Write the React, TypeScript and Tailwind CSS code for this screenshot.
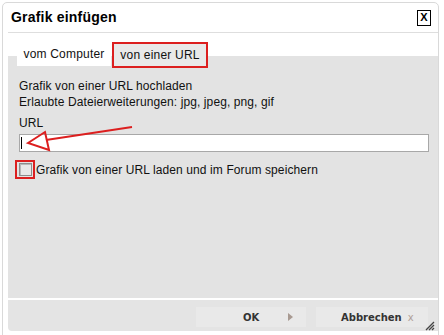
import React from 'react'

// Dialog "Grafik einfügen" with annotation marks (red boxes + arrow)
export default function App() {
  return (
    <div className="relative w-[444px] h-[335px] overflow-hidden bg-white" style={{ fontFamily: '"Liberation Sans", Arial, sans-serif' }}>
      <div className="ml-[2px] mt-[2px] w-[437px] h-[345px] border border-[#d9d9d9] rounded-t-[5px] bg-white flex flex-col">
        {/* Header */}
        <div className="ml-[5px] h-[30px] border-b border-[#dedede] flex items-center justify-between pl-[3px] pr-[7px]">
          <span className="text-[14px] font-bold text-black tracking-[0.2px]">Grafik einfügen</span>
          <span className="w-[14px] h-[16px] border border-black flex items-center justify-center text-[11px] font-bold leading-none text-black">X</span>
        </div>

        {/* Tabs */}
        <div className="ml-[5px] mt-[9px] h-[26px] flex items-stretch pl-[9px] bg-[linear-gradient(to_bottom,#ffffff_14px,#e3e3e3_14px)] tracking-[0.2px]">
          <div className="w-[94px] h-[24px] bg-white flex items-center justify-center text-[12px] text-[#111]">vom Computer</div>
          <div className="w-[96px] h-[26px] ml-px border-2 border-[#dc1f1f] bg-[#e9e9e9] flex items-center justify-center text-[12px] text-[#111]">von einer URL</div>
        </div>

        {/* Panel */}
        <div className="ml-[5px] h-[230px] bg-[#e3e3e3] pl-[11px] pr-[9px] pt-[10px] text-[12px] text-[#111] tracking-[0.1px]">
          <div className="leading-[16px]">Grafik von einer URL hochladen</div>
          <div className="leading-[16px]">Erlaubte Dateierweiterungen: jpg, jpeg, png, gif</div>
          <div className="mt-[6px] leading-[15px]">URL</div>
          <div className="mt-[3px] h-[18px] bg-white border border-[#a8a8a8] flex items-center pl-[1px]">
            <span className="w-px h-[12px] bg-black" />
          </div>
          <div className="mt-[8px] flex items-center">
            <div className="-ml-[4px] w-[20px] h-[19px] border-2 border-[#dc1f1f] flex items-center justify-center">
              <span className="w-[13px] h-[13px] border border-[#8c8c8c] bg-[#e8e8e8] shadow-[inset_1px_1px_0_#b8b8b8]" />
            </div>
            <span className="ml-px">Grafik von einer URL laden und im Forum speichern</span>
          </div>
        </div>

        {/* Footer */}
        <div className="ml-[5px] mt-[2px] h-[31px] bg-[#e4e4e4] rounded-bl-[4px] flex items-center justify-end gap-[10px] pr-[10px] pt-[3px]" style={{ fontFamily: '"DejaVu Sans", Verdana, sans-serif' }}>
          <div className="w-[110px] h-[20px] bg-[#e9e9e9] flex items-center pl-[47px] text-[10px] font-bold text-[#333]">
            <span>OK</span>
            <span className="ml-auto mr-[13px] w-0 h-0 border-y-[4px] border-y-transparent border-l-[5px] border-l-[#a89a92]" />
          </div>
          <div className="w-[112px] h-[20px] bg-[#e9e9e9] flex items-center pl-[25px] text-[10px] font-bold text-[#333]">
            <span>Abbrechen</span>
            <span className="ml-[6px] text-[#b0a098] font-normal">x</span>
          </div>
        </div>
      </div>

      {/* resize grip */}
      <svg className="absolute left-[425px] top-[320px]" width="10" height="11" viewBox="0 0 10 11">
        <path d="M1 10 L9 2 M4 10 L9 5 M7 10 L9 8" stroke="#444" strokeWidth="1.3" />
      </svg>

      {/* red annotation arrow */}
      <svg className="absolute left-0 top-0 pointer-events-none" width="444" height="335">
        <path d="M132 127 L46 140" stroke="#dc1f1f" strokeWidth="2" fill="none" />
        <path d="M28 143 L45 132 L49 150 Z" stroke="#dc1f1f" strokeWidth="2" fill="none" strokeLinejoin="miter" />
      </svg>
    </div>
  )
}
